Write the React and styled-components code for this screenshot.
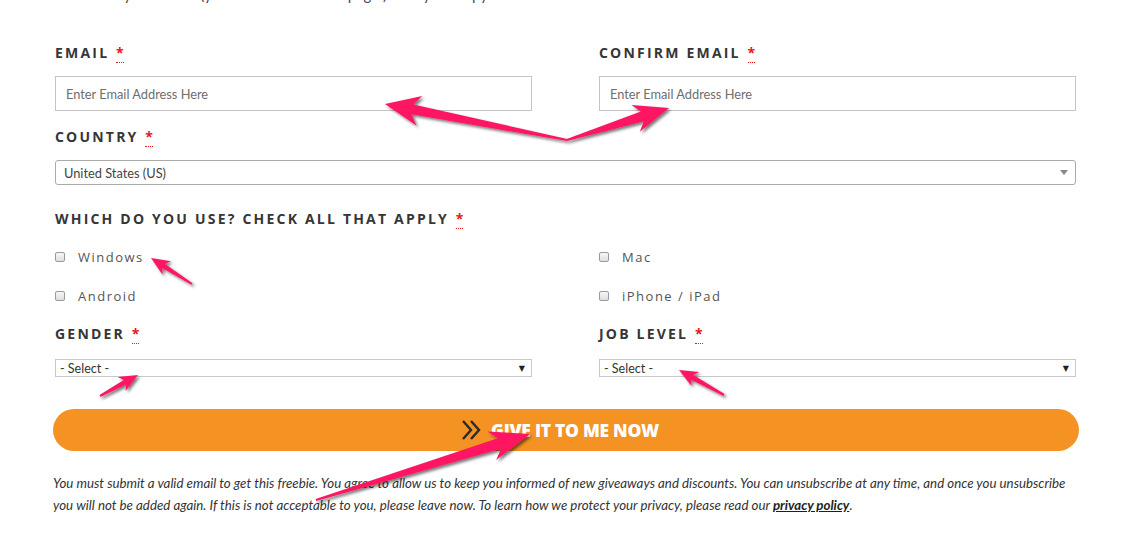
import React from "react";
import styled, { createGlobalStyle } from "styled-components";

const Global = createGlobalStyle`
  html, body { margin: 0; padding: 0; background: #fff; }
  body { width: 1142px; height: 533px; overflow: hidden; font-family: "Open Sans", "Liberation Sans", sans-serif; }
`;

const Page = styled.div`
  position: relative;
  width: 1142px;
  height: 533px;
  overflow: hidden;
  background: #fff;
`;

const Intro = styled.p`
  margin: -14px 0 0 0;
  padding-left: 85px;
  height: 17px;
  font-family: "Lato", sans-serif;
  font-size: 15px;
  line-height: 17px;
  color: #4a4a4a;
  white-space: nowrap;
`;

const Form = styled.div`
  margin-left: 53px;
  width: 1026px;
  display: flex;
  flex-direction: column;
`;

const Fields = styled.div`
  margin: 0 3px 0 2px;
  display: flex;
  flex-direction: column;
`;

const TwoCol = styled.div`
  display: grid;
  grid-template-columns: 477px 477px;
  column-gap: 67px;
  margin-top: ${(p) => p.$top ?? 0}px;
`;

const Field = styled.div`
  display: flex;
  flex-direction: column;
  margin-top: ${(p) => p.$top ?? 0}px;
`;

const Label = styled.div`
  font-family: "Open Sans", sans-serif;
  font-weight: 700;
  font-size: 14px;
  letter-spacing: 2.2px;
  line-height: 20px;
  color: #363636;
  margin-bottom: ${(p) => p.$gap ?? 13}px;
  white-space: nowrap;
`;

const Req = styled.abbr`
  color: #e4181b;
  text-decoration: none;
  border-bottom: 1px dotted #e4181b;
  margin-left: 1px;
  letter-spacing: 0;
`;

const TextInput = styled.div`
  box-sizing: border-box;
  height: 35px;
  border: 1px solid #c4c4c4;
  padding-left: 10px;
  display: flex;
  align-items: center;
  font-family: "Lato", sans-serif;
  font-size: 12.8px;
  color: #6e6e6e;
`;

const CountrySelect = styled.div`
  box-sizing: border-box;
  height: 25px;
  border: 1px solid #aaa;
  border-radius: 3px;
  padding-left: 8px;
  display: flex;
  align-items: center;
  font-family: "Lato", sans-serif;
  font-size: 12.8px;
  color: #444;
`;

const Caret = styled.span`
  margin-left: auto;
  margin-right: 7px;
  width: 0;
  height: 0;
  border-left: 4px solid transparent;
  border-right: 4px solid transparent;
  border-top: 5px solid #888;
`;

const SmallSelect = styled.div`
  box-sizing: border-box;
  height: 18px;
  border: 1px solid #c8c8c8;
  padding: 0 6px 0 4px;
  display: flex;
  align-items: center;
  font-family: "Lato", sans-serif;
  font-size: 12.5px;
  color: #333;
`;

const BlackArrow = styled.span`
  margin-left: auto;
  font-size: 8px;
  color: #222;
  font-family: "DejaVu Sans", sans-serif;
`;

const CheckRow = styled.div`
  display: flex;
  align-items: center;
  height: 20px;
`;

const Box = styled.span`
  box-sizing: border-box;
  width: 10px;
  height: 10px;
  border: 1px solid #9a9a9a;
  border-radius: 2px;
  background: linear-gradient(#f7f7f7, #dedede);
  margin-right: 13px;
`;

const CheckText = styled.span`
  font-family: "Open Sans", sans-serif;
  font-size: 13px;
  letter-spacing: 1.5px;
  color: #555;
`;

const Button = styled.div`
  margin-top: 32px;
  height: 42px;
  border-radius: 21px;
  background: #f49223;
  display: flex;
  align-items: center;
  justify-content: center;
  gap: 8px;
  padding-right: 12px;
`;

const ButtonText = styled.span`
  font-family: "Open Sans", sans-serif;
  font-weight: 800;
  font-size: 17.5px;
  color: #fff;
  letter-spacing: -0.3px;
`;

const Disclaimer = styled.p`
  margin: 21px 0 0 0;
  font-family: "Lato", sans-serif;
  font-style: italic;
  font-size: 13.3px;
  line-height: 22px;
  color: #333;
  width: 1022px;
`;

const PolicyLink = styled.a`
  font-weight: 700;
  color: #1e1e1e;
  text-decoration: underline;
`;

const Overlay = styled.svg`
  position: absolute;
  left: 0;
  top: 0;
  pointer-events: none;
`;

function arrowPoints(tail, tip, headLen, hw, sw, tw) {
  const dx = tip[0] - tail[0];
  const dy = tip[1] - tail[1];
  const len = Math.hypot(dx, dy);
  const ux = dx / len, uy = dy / len;
  const nx = -uy, ny = ux;
  const bx = tip[0] - ux * headLen, by = tip[1] - uy * headLen;
  const wx = bx - ux * headLen * 0.25, wy = by - uy * headLen * 0.25;
  const pts = [
    [tail[0] + nx * tw / 2, tail[1] + ny * tw / 2],
    [bx + nx * sw / 2, by + ny * sw / 2],
    [wx + nx * hw, wy + ny * hw],
    tip,
    [wx - nx * hw, wy - ny * hw],
    [bx - nx * sw / 2, by - ny * sw / 2],
    [tail[0] - nx * tw / 2, tail[1] - ny * tw / 2],
  ];
  return pts.map((p) => p.map((v) => v.toFixed(1)).join(",")).join(" ");
}

const arrows = [
  { tail: [567, 140], tip: [385, 104], h: 28, hw: 15, sw: 10, tw: 2 },
  { tail: [567, 140], tip: [669, 108], h: 28, hw: 14, sw: 10, tw: 2 },
  { tail: [192, 284], tip: [151, 258], h: 15, hw: 8, sw: 5, tw: 2 },
  { tail: [100, 396], tip: [138, 375], h: 15, hw: 8, sw: 5, tw: 2 },
  { tail: [724, 395], tip: [679, 370], h: 15, hw: 8, sw: 5, tw: 2 },
  { tail: [316, 500], tip: [530, 434], h: 32, hw: 15, sw: 11, tw: 2 },
];

function Chevrons() {
  return (
    <svg width="22" height="22" viewBox="0 0 22 22">
      <polyline points="2,2 10,11 2,20" fill="none" stroke="#2b2b2b" strokeWidth="2.4" />
      <polyline points="10,2 18,11 10,20" fill="none" stroke="#2b2b2b" strokeWidth="2.4" />
    </svg>
  );
}

export default function App() {
  return (
    <Page>
      <Global />
      <Intro>Once you submit (you will be taken to a page ) with your copy</Intro>
      <Form>
        <Fields>
          <TwoCol $top={40}>
            <Field>
              <Label>EMAIL <Req title="required">*</Req></Label>
              <TextInput>Enter Email Address Here</TextInput>
            </Field>
            <Field>
              <Label>CONFIRM EMAIL <Req title="required">*</Req></Label>
              <TextInput>Enter Email Address Here</TextInput>
            </Field>
          </TwoCol>
          <Field $top={16}>
            <Label>COUNTRY <Req title="required">*</Req></Label>
            <CountrySelect>
              United States (US)
              <Caret />
            </CountrySelect>
          </Field>
          <Field $top={24}>
            <Label $gap={0}>WHICH DO YOU USE? CHECK ALL THAT APPLY <Req title="required">*</Req></Label>
          </Field>
          <TwoCol $top={18}>
            <CheckRow><Box /><CheckText>Windows</CheckText></CheckRow>
            <CheckRow><Box /><CheckText>Mac</CheckText></CheckRow>
          </TwoCol>
          <TwoCol $top={19}>
            <CheckRow><Box /><CheckText>Android</CheckText></CheckRow>
            <CheckRow><Box /><CheckText>iPhone / iPad</CheckText></CheckRow>
          </TwoCol>
          <TwoCol $top={18}>
            <Field>
              <Label $gap={15}>GENDER <Req title="required">*</Req></Label>
              <SmallSelect>- Select -<BlackArrow>▼</BlackArrow></SmallSelect>
            </Field>
            <Field>
              <Label $gap={15}>JOB LEVEL <Req title="required">*</Req></Label>
              <SmallSelect>- Select -<BlackArrow>▼</BlackArrow></SmallSelect>
            </Field>
          </TwoCol>
        </Fields>
        <Button>
          <Chevrons />
          <ButtonText>GIVE IT TO ME NOW</ButtonText>
        </Button>
        <Disclaimer>
          You must submit a valid email to get this freebie. You agree to allow us to keep you informed of new giveaways and discounts. You can unsubscribe at any time, and once you unsubscribe you will not be added again. If this is not acceptable to you, please leave now. To learn how we protect your privacy, please read our <PolicyLink href="#">privacy policy</PolicyLink>.
        </Disclaimer>
      </Form>
      <Overlay width="1142" height="533" viewBox="0 0 1142 533">
        <defs>
          <filter id="sh" x="-20%" y="-20%" width="140%" height="140%">
            <feDropShadow dx="2" dy="2" stdDeviation="1.5" floodColor="#000" floodOpacity="0.55" />
          </filter>
        </defs>
        {arrows.map((a, i) => (
          <polygon key={i} points={arrowPoints(a.tail, a.tip, a.h, a.hw, a.sw, a.tw)} fill="#fe1462" filter="url(#sh)" />
        ))}
      </Overlay>
    </Page>
  );
}
